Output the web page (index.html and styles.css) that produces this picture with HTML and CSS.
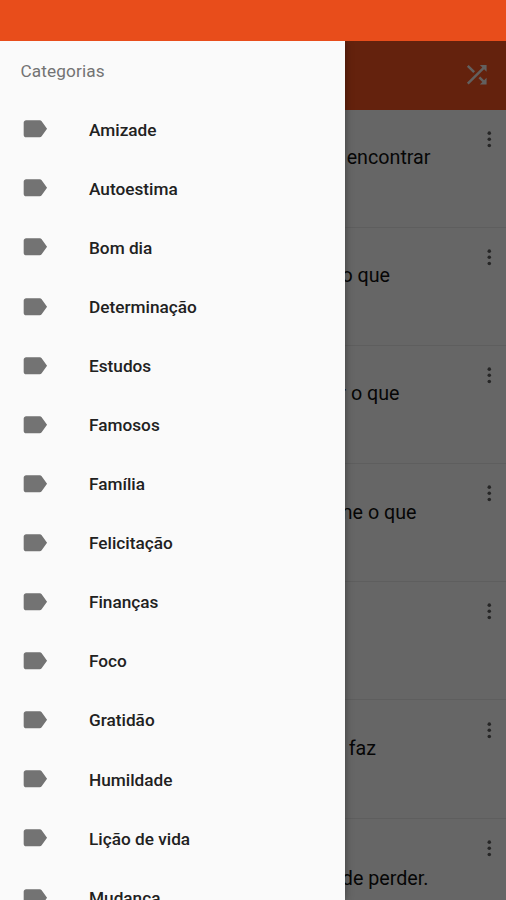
FILE: index.html
```html
<!DOCTYPE html>
<html lang="pt-BR">
<head>
<meta charset="utf-8">
<title>Categorias</title>
<link rel="stylesheet" href="styles.css">
</head>
<body>
<svg class="defs" aria-hidden="true">
  <symbol id="label" viewBox="0 0 24 24"><path d="M17.63 5.84C17.27 5.33 16.67 5 16 5L5 5.01C3.9 5.01 3 5.9 3 7v10c0 1.1.9 1.99 2 1.99L16 19c.67 0 1.27-.33 1.63-.84L22 12l-4.37-6.16z"/></symbol>
  <symbol id="more" viewBox="0 0 24 24"><circle cx="12" cy="6" r="1.75"/><circle cx="12" cy="12" r="1.75"/><circle cx="12" cy="18" r="1.75"/></symbol>
</svg>
<div class="status-bar"></div>
<div class="screen">
  <main class="page">
    <header class="app-bar">
      <svg class="shuffle" viewBox="0 0 24 24"><path d="M10.59 9.17L5.41 4 4 5.41l5.17 5.17 1.42-1.41zM14.5 4l2.04 2.04L4 18.59 5.41 20 17.96 7.46 20 9.5V4h-5.5zm.33 9.41l-1.41 1.41 3.13 3.13L14.5 20H20v-5.5l-2.04 2.04-3.13-3.13z"/></svg>
    </header>
    <ul class="quotes">
      <li class="quote"><p class="quote-text end-430">encontrar</p><svg class="more"><use href="#more"/></svg></li>
      <li class="quote"><p class="quote-text end-390">o que</p><svg class="more"><use href="#more"/></svg></li>
      <li class="quote"><p class="quote-text end-399">r o que</p><svg class="more"><use href="#more"/></svg></li>
      <li class="quote"><p class="quote-text end-416">me o que</p><svg class="more"><use href="#more"/></svg></li>
      <li class="quote"><p class="quote-text"></p><svg class="more"><use href="#more"/></svg></li>
      <li class="quote"><p class="quote-text end-376">faz</p><svg class="more"><use href="#more"/></svg></li>
      <li class="quote"><p class="quote-text end-428 lower">de perder.</p><svg class="more"><use href="#more"/></svg></li>
    </ul>
  </main>
  <div class="scrim"></div>
  <nav class="drawer">
    <h1 class="drawer-title">Categorias</h1>
    <ul class="categories">
      <li class="category"><svg class="label"><use href="#label"/></svg><span>Amizade</span></li>
      <li class="category"><svg class="label"><use href="#label"/></svg><span>Autoestima</span></li>
      <li class="category"><svg class="label"><use href="#label"/></svg><span>Bom dia</span></li>
      <li class="category"><svg class="label"><use href="#label"/></svg><span>Determinação</span></li>
      <li class="category"><svg class="label"><use href="#label"/></svg><span>Estudos</span></li>
      <li class="category"><svg class="label"><use href="#label"/></svg><span>Famosos</span></li>
      <li class="category"><svg class="label"><use href="#label"/></svg><span>Família</span></li>
      <li class="category"><svg class="label"><use href="#label"/></svg><span>Felicitação</span></li>
      <li class="category"><svg class="label"><use href="#label"/></svg><span>Finanças</span></li>
      <li class="category"><svg class="label"><use href="#label"/></svg><span>Foco</span></li>
      <li class="category"><svg class="label"><use href="#label"/></svg><span>Gratidão</span></li>
      <li class="category"><svg class="label"><use href="#label"/></svg><span>Humildade</span></li>
      <li class="category"><svg class="label"><use href="#label"/></svg><span>Lição de vida</span></li>
      <li class="category"><svg class="label"><use href="#label"/></svg><span>Mudança</span></li>
    </ul>
  </nav>
</div>
</body>
</html>
```
FILE: styles.css
```css
* {
  box-sizing: border-box;
  margin: 0;
  padding: 0;
}

body {
  height: 900px;
  overflow: hidden;
  font-family: Roboto, "Liberation Sans", sans-serif;
  background: #fff;
}

ul {
  list-style: none;
}

.defs {
  display: none;
}

.status-bar {
  height: 41px;
  background: #e84d1b;
}

.screen {
  position: relative;
  height: 859px;
  overflow: hidden;
}

.app-bar {
  display: flex;
  align-items: center;
  justify-content: flex-end;
  height: 68.5px;
  padding: 0 14.5px 1.5px 0;
  background: #fa5622;
}

.shuffle {
  width: 29.5px;
  height: 29.5px;
  fill: #f4f0ee;
}

.quote {
  display: flex;
  justify-content: space-between;
  height: 118.2px;
  padding: 17.2px 4px 0 0;
  border-bottom: 1px solid #eaeaea;
}

.quote-text {
  margin-top: 18.4px;
  font-size: 19.7px;
  line-height: 26px;
  text-align: right;
  white-space: nowrap;
  color: #101010;
}

.quote-text.lower {
  margin-top: 30.4px;
}

.end-376 { width: 376px; }
.end-390 { width: 390px; }
.end-399 { width: 399.5px; }
.end-416 { width: 416.5px; }
.end-428 { width: 428.5px; }
.end-430 { width: 430.5px; }

.more {
  flex: none;
  width: 24.6px;
  height: 24.6px;
  fill: #606060;
}

.scrim {
  position: absolute;
  inset: 0;
  background: rgba(0, 0, 0, 0.6);
}

.drawer {
  position: absolute;
  inset: 0 auto 0 0;
  width: 345px;
  overflow: hidden;
  background: #fafafa;
  box-shadow: 0 0 8px rgba(0, 0, 0, 0.4);
}

.drawer-title {
  height: 59px;
  padding-left: 20.5px;
  font-size: 17.23px;
  font-weight: 400;
  line-height: 60px;
  letter-spacing: 0.12px;
  color: #737373;
}

.category {
  display: flex;
  align-items: center;
  gap: 39.5px;
  height: 59.1px;
  padding-left: 20px;
  font-size: 17.23px;
  font-weight: 500;
  line-height: 20px;
  color: #212121;
}

.label {
  flex: none;
  width: 29.5px;
  height: 29.5px;
  margin-bottom: 1px;
  fill: #737373;
}
```
